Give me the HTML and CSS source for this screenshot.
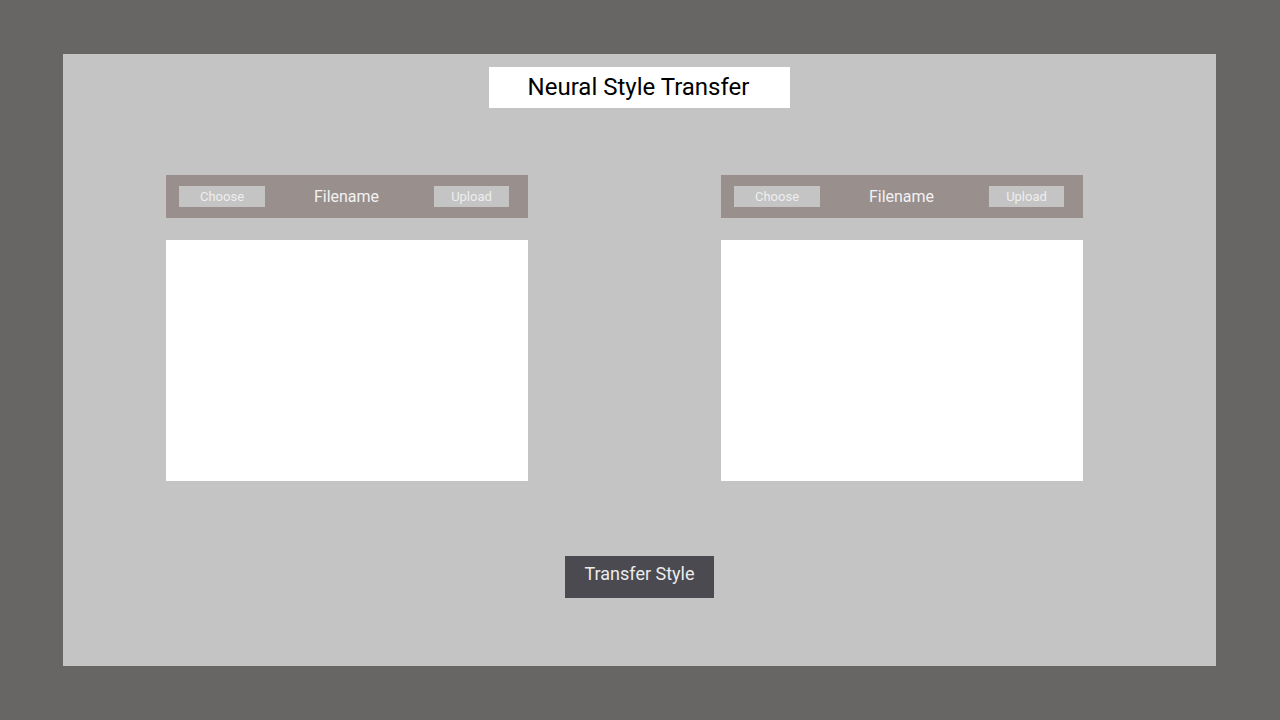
FILE: index.html
```html
<!DOCTYPE html>
<html>
<head>
<meta charset="utf-8">
<link rel="stylesheet" href="styles.css">
</head>
<body>
<main class="panel">
  <h1 class="title">Neural Style Transfer</h1>
  <div class="columns">
    <section class="col">
      <div class="toolbar">
        <button class="small-btn choose">Choose</button>
        <span class="filename">Filename</span>
        <button class="small-btn upload">Upload</button>
      </div>
      <div class="image-box"></div>
    </section>
    <section class="col">
      <div class="toolbar">
        <button class="small-btn choose">Choose</button>
        <span class="filename">Filename</span>
        <button class="small-btn upload">Upload</button>
      </div>
      <div class="image-box"></div>
    </section>
  </div>
  <button class="transfer">Transfer Style</button>
</main>
</body>
</html>
```
FILE: styles.css
```css
html, body {
  margin: 0;
  padding: 0;
}
body {
  background: #676664;
  font-family: Roboto, "Liberation Sans", sans-serif;
  width: 1280px;
  height: 720px;
  overflow: hidden;
  padding-top: 54px;
  box-sizing: border-box;
}
.panel {
  margin-left: 63px;
  width: 1153px;
  height: 612px;
  background: #c4c4c4;
  display: flex;
  flex-direction: column;
  align-items: center;
  padding-top: 13px;
  box-sizing: border-box;
}
.title {
  margin: 0;
  width: 301px;
  height: 41px;
  background: #ffffff;
  color: #000;
  font-size: 24px;
  font-weight: 400;
  line-height: 41px;
  text-align: center;
  padding-right: 2px;
  box-sizing: border-box;
}
.columns {
  align-self: stretch;
  display: flex;
  gap: 193px;
  padding-left: 103px;
  margin-top: 67px;
}
.col {
  width: 362px;
  display: flex;
  flex-direction: column;
  gap: 22px;
}
.toolbar {
  height: 43px;
  background: #998f8d;
  display: flex;
  align-items: center;
  justify-content: space-between;
  padding: 0 19px 0 13px;
  box-sizing: border-box;
}
.small-btn {
  height: 21px;
  border: none;
  background: #c4c4c4;
  color: #eeeeee;
  font-family: Roboto, "Liberation Sans", sans-serif;
  font-size: 13px;
  padding: 1px 0 0 0;
  line-height: 20px;
  box-sizing: border-box;
}
.choose { width: 86px; }
.upload { width: 75px; }
.filename {
  color: #f2f2f2;
  font-size: 16px;
  margin-left: -6px;
}
.image-box {
  height: 241px;
  background: #ffffff;
}
.transfer {
  margin-top: 75px;
  width: 149px;
  height: 42px;
  border: none;
  background: #4a4a50;
  color: #ececec;
  font-family: Roboto, "Liberation Sans", sans-serif;
  font-size: 18px;
  padding: 0 0 8px 0;
  box-sizing: border-box;
}
```
